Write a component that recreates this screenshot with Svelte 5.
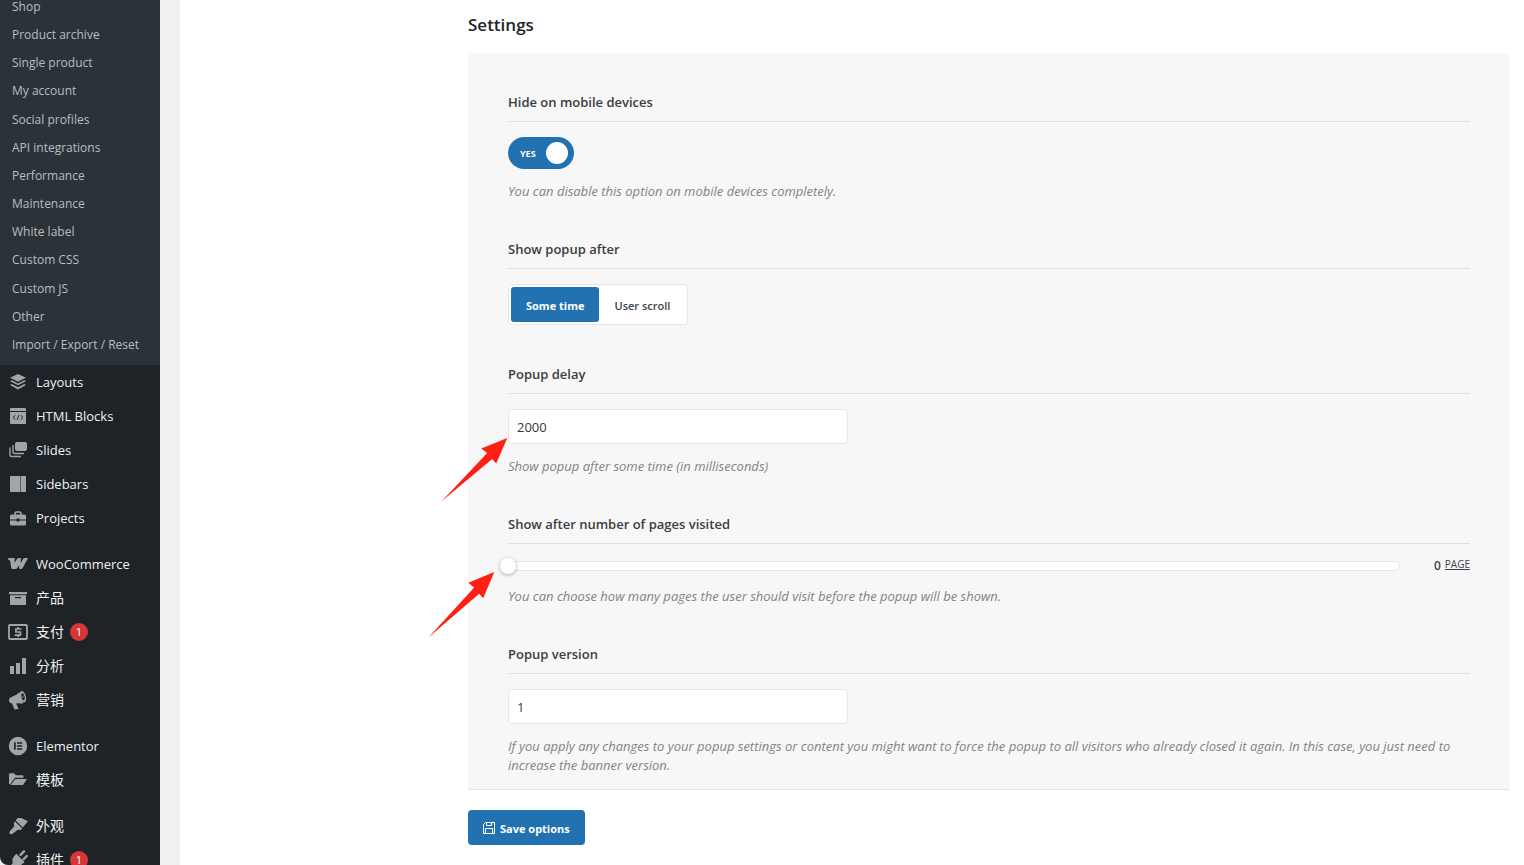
<script lang="ts">
  const submenu = [
    "Shop",
    "Product archive",
    "Single product",
    "My account",
    "Social profiles",
    "API integrations",
    "Performance",
    "Maintenance",
    "White label",
    "Custom CSS",
    "Custom JS",
    "Other",
    "Import / Export / Reset",
  ];

  const groups = [
    [
      { icon: "layouts", text: "Layouts" },
      { icon: "html", text: "HTML Blocks" },
      { icon: "slides", text: "Slides" },
      { icon: "sidebars", text: "Sidebars" },
      { icon: "projects", text: "Projects" },
    ],
    [
      { icon: "woo", text: "WooCommerce" },
      { icon: "archive", text: "产品" },
      { icon: "payments", text: "支付", count: 1 },
      { icon: "chart", text: "分析" },
      { icon: "megaphone", text: "营销" },
    ],
    [
      { icon: "elementor", text: "Elementor" },
      { icon: "folder", text: "模板" },
    ],
    [
      { icon: "brush", text: "外观" },
      { icon: "plugin", text: "插件", count: 1 },
    ],
  ];

  let hideOnMobile = true;
  let showAfter = "time";
  let delay = "2000";
  let pages = 0;
  let version = "1";
</script>

<style>
  :global(body) {
    background-color: #f0f0f1;
    font-family: "Open Sans", "Noto Sans CJK SC", sans-serif;
  }

  .shell {
    display: flex;
    gap: 20px;
    height: 100vh;
    overflow: hidden;
  }

  .sidebar {
    flex: 0 0 160px;
    overflow: hidden;
    background-color: #1d2327;
    border-bottom-left-radius: 8px;
  }

  ul {
    list-style: none;
    margin: 0;
    padding: 0;
  }

  a {
    color: inherit;
    text-decoration: none;
  }

  .submenu {
    display: flex;
    flex-direction: column;
    height: 366px;
    margin-top: -7px;
    padding-bottom: 6px;
    background-color: #2c3338;
    color: #b9bdc1;
    font-size: 12px;
    line-height: 28px;
  }

  .submenu li {
    flex: 1;
  }

  .submenu a {
    display: block;
    padding: 0 12px;
    white-space: nowrap;
  }

  .menu {
    display: flex;
    flex-direction: column;
    gap: 12px;
  }

  .menu a {
    display: flex;
    align-items: center;
    height: 34px;
    padding-left: 8px;
    color: #f0f0f1;
    font-size: 13px;
  }

  .menu svg {
    flex: none;
    width: 20px;
    height: 20px;
    margin-right: 8px;
    color: #a0a5aa;
  }

  .menu .cjk {
    font-family: "Noto Sans CJK SC", sans-serif;
    font-size: 14px;
    line-height: 20px;
    padding-bottom: 2px;
  }

  .count {
    width: 18px;
    height: 18px;
    margin-left: 6px;
    border-radius: 9px;
    background-color: #d63638;
    color: #fff;
    font-size: 11px;
    line-height: 18px;
    text-align: center;
  }

  .content {
    flex: 1;
    min-width: 0;
    padding: 0 14px 0 288px;
    background-color: #fff;
  }

  h2 {
    margin: 0;
    padding: 13px 0 16px;
    color: #1d2327;
    font-size: 17px;
    font-weight: 600;
    line-height: 24px;
  }

  .panel {
    display: flex;
    flex-direction: column;
    gap: 39px;
    padding: 39px 40px 15px;
    border-bottom: 1px solid #e5e5e5;
    border-radius: 4px 4px 0 0;
    background-color: #f7f7f7;
  }

  .field {
    position: relative;
  }

  .title {
    display: block;
    margin-bottom: 15px;
    padding-bottom: 9px;
    border-bottom: 1px solid #dfdfdf;
    color: #3a3d40;
    font-size: 13px;
    font-weight: 600;
    line-height: 20px;
  }

  .desc {
    margin: 13px 0 -1px;
    color: #7f8387;
    font-size: 13px;
    font-style: italic;
    line-height: 19px;
  }

  .switch {
    display: flex;
    align-items: center;
    justify-content: space-between;
    box-sizing: border-box;
    width: 66px;
    height: 32px;
    padding: 0 6px 0 12px;
    border: none;
    border-radius: 16px;
    background-color: #2271b1;
    color: #fff;
    font: 700 9px "Open Sans", sans-serif;
    cursor: pointer;
  }

  .switch.off {
    flex-direction: row-reverse;
    padding: 0 12px 0 6px;
    background-color: #a7aaad;
  }

  .knob {
    width: 22px;
    height: 22px;
    border-radius: 50%;
    background-color: #fff;
  }

  .set {
    display: inline-flex;
    vertical-align: top;
    padding: 2px;
    border: 1px solid #e5e5e5;
    border-radius: 4px;
    background-color: #fff;
  }

  .set button {
    height: 35px;
    padding: 2px 15px 0;
    border: none;
    border-radius: 3px;
    background-color: transparent;
    color: #3c434a;
    font: 600 11px "Open Sans", sans-serif;
    cursor: pointer;
  }

  .set button.active {
    background-color: #2271b1;
    color: #fff;
    font-weight: 700;
  }

  .text {
    display: block;
    box-sizing: border-box;
    width: 340px;
    height: 35px;
    padding: 0 8px;
    border: 1px solid #e5e5e5;
    border-radius: 4px;
    background-color: #fff;
    color: #32373c;
    font: 13px "Open Sans", sans-serif;
  }

  .range {
    display: flex;
    align-items: center;
    height: 14px;
    padding-bottom: 1px;
  }

  .track {
    flex: 1;
    display: flex;
    align-items: center;
    box-sizing: border-box;
    height: 10px;
    border: 1px solid #e5e5e5;
    border-radius: 4px;
    background-color: #fff;
  }

  .track input {
    flex: 1;
    height: 16px;
    margin: 0 -9px;
    background: transparent;
    appearance: none;
  }

  .track input::-webkit-slider-thumb {
    width: 16px;
    height: 16px;
    border-radius: 50%;
    background-color: #fff;
    box-shadow: 0 1px 4px rgba(0, 0, 0, 0.3);
    appearance: none;
  }

  .value {
    display: flex;
    justify-content: flex-end;
    gap: 4px;
    width: 70px;
    color: #3c434a;
    font-size: 12px;
    font-weight: 600;
    line-height: 18px;
  }

  .unit {
    font-size: 10px;
    font-weight: 400;
    line-height: 14px;
    text-decoration: underline;
  }

  .arrow {
    position: absolute;
    width: 66px;
    height: 66px;
    overflow: visible;
    fill: #ff2015;
    pointer-events: none;
  }

  .arrow-delay {
    top: 73px;
    left: -66px;
  }

  .arrow-pages {
    top: 57px;
    left: -79px;
    height: 68px;
  }

  .save {
    display: flex;
    align-items: center;
    gap: 5px;
    height: 35px;
    margin-top: 20px;
    padding: 1px 15px 0;
    border: none;
    border-radius: 4px;
    background-color: #2271b1;
    color: #fff;
    font: 700 11px "Open Sans", sans-serif;
    cursor: pointer;
  }

  .save svg {
    width: 12px;
    height: 12px;
  }
</style>

{#snippet glyph(name)}
  <svg viewBox="0 0 20 20" fill="currentColor" aria-hidden="true">
    {#if name === "layouts"}
      <path d="M10 2l8 3.7-8 4.1-8-4.1z" />
      <path d="M2 9.2l1.8-.9L10 11.4l6.2-3.1 1.8.9-8 4.1z" />
      <path d="M2 13l1.8-.9 6.2 3.1 6.2-3.1 1.8.9-8 4.4z" />
    {:else if name === "html"}
      <path d="M3 2h14a1 1 0 0 1 1 1v2H2V3a1 1 0 0 1 1-1z" />
      <path d="M2 6h16v11a1 1 0 0 1-1 1H3a1 1 0 0 1-1-1z" />
      <path d="M7.3 9.3L5 11.5l2.3 2.2M12.7 9.3l2.3 2.2-2.3 2.2M10.8 9l-1.6 5" fill="none" stroke="#1d2327" />
    {:else if name === "slides"}
      <rect x="7" y="2" width="12" height="9" rx="2" />
      <path d="M5 5v7a1.5 1.5 0 0 0 1.5 1.5H16M2 7.5v7.5A1.5 1.5 0 0 0 3.5 16.5H13" fill="none" stroke="currentColor" stroke-width="1.4" />
    {:else if name === "sidebars"}
      <path d="M3 2h9v16H3a1 1 0 0 1-1-1V3a1 1 0 0 1 1-1z" />
      <path d="M13 2h4a1 1 0 0 1 1 1v14a1 1 0 0 1-1 1h-4z" />
      <path d="M12 2h1v16h-1z" fill="#6b5d3a" />
    {:else if name === "projects"}
      <path d="M7 7V5.500A1.500 1.500 0 0 1 8.500 4h3A1.500 1.500 0 0 1 13 5.500V7" fill="none" stroke="currentColor" stroke-width="1.6" />
      <path d="M3.500 6.500h13A1.500 1.500 0 0 1 18 8v3.500h-6.500v-1h-3v1H2V8a1.500 1.500 0 0 1 1.500-1.500z" />
      <path d="M2 12.500h6.500v1h3v-1H18V16a1.500 1.500 0 0 1-1.500 1.500h-13A1.500 1.500 0 0 1 2 16z" />
    {:else if name === "woo"}
      <path d="M1 4h4.600c.8 0 1.200.4 1.100 1.200L6.300 9l2.900-4.200c.5-.6 1-.8 1.600-.8h1.100c.8 0 1.100.5 1 1.300L12.500 9.500 15 5c.4-.7.9-1 1.600-1H20l-5.200 9.800c-.5.9-1.200 1.200-2.300 1.200-1 0-1.500-.6-1.400-1.500l.2-2.500-2 2.900c-.6.8-1.200 1.100-2.200 1.100H5c-1.100 0-1.700-.6-1.900-1.600L2.300 7.400C2 6.400 1.600 6 .2 6V4.800C.2 4.300.5 4 1 4z" />
    {:else if name === "archive"}
      <path d="M1 4h18v2.300H1z" />
      <path d="M2 7.200h16V17H2zM7 9v1.300h6V9z" fill-rule="evenodd" />
    {:else if name === "payments"}
      <rect x="1" y="3" width="18" height="14" rx="1" fill="none" stroke="currentColor" stroke-width="1.8" />
      <path d="M12.600 7.800V7H7.900v3h4.500v3.200H7.400v-.8M10 5v2M10 13v2" fill="none" stroke="currentColor" stroke-width="1.7" />
    {:else if name === "chart"}
      <path d="M2 10h4v8H2zM8 7h4v11H8zM14 2h4v16h-4z" />
    {:else if name === "megaphone"}
      <path d="M11.200 2.300C8.500 5.200 5 6.400 2.500 7.400c-1.700.8-2 3.600-.7 5.100.8.9 2.200.8 2.200.8l2.500 6.300 4-.6-2.300-5.500c2-.4 4.500-.4 6.600.4z" />
      <path d="M14.100 1c-3.200.5-3.500 4.300-2.500 7.300.8 2.700 2.700 4.900 4.700 4.100 2-.9 2.300-4.200 1.300-7-.7-2.100-2-4.200-3.500-4.400zM14.300 3c1.400.5 2.500 3 2.500 5 0 1.700-1 3-2.100 2-1.400-1.300-2.200-6.500-.4-7z" fill-rule="evenodd" />
      <path d="M13.900 5.200c1.300.3 2 2.300 1 3.200z" />
    {:else if name === "elementor"}
      <path d="M10 .8a9.200 9.200 0 1 0 0 18.400A9.200 9.200 0 0 0 10 .8zM6 6.200h1.700v7.600H6zM9 6.200h5.200v1.500H9zM9 9.200h5.200v1.600H9zM9 12.300h5.200v1.500H9z" fill-rule="evenodd" />
    {:else if name === "folder"}
      <path d="M1 4.500A1.300 1.300 0 0 1 2.300 3.200H6l1.800 2h6.400a1.300 1.300 0 0 1 1.300 1.300v1.300H7L2 14.500l-1-.8z" />
      <path d="M7.300 8.900H19l-4 6H2.600z" />
    {:else if name === "brush"}
      <path d="M9.500 2h3.700L20 5.300l-5.200 6.300-7.100-7z" />
      <path d="M7 5.400l7.200 7-1.700 1.500-2.700-.2-5.500 4.300c-1.600 1.200-3.800-.8-2.600-2.500l4.500-5.300-.5-2.900z" />
    {:else if name === "plugin"}
      <path d="M12.600 4.800L16 1.300M15.600 9.300L18.700 6" fill="none" stroke="currentColor" stroke-width="2.400" stroke-linecap="round" />
      <path d="M8.300 3.800l8.200 8.300-2.800 2.400c-2 1.600-4.600 1.700-6.600.8L3.600 18.800l-2.200-2.200 3.500-3.500c-.9-2-.7-4.600 1-6.500z" />
    {/if}
  </svg>
{/snippet}

{#snippet arrow(place)}
  <svg class="arrow {place}" viewBox="0 0 66 66" preserveAspectRatio="none" aria-hidden="true">
    <path d="M65.300 1L39.300 11.500l5.900 4.600L-.6 64.600 50.200 22l4 4.500z" />
  </svg>
{/snippet}

<div class="shell">
  <nav class="sidebar">
    <ul class="submenu">
      {#each submenu as text}
        <li><a href="#settings">{text}</a></li>
      {/each}
    </ul>
    <div class="menu">
      {#each groups as items}
        <ul>
          {#each items as item}
            <li>
              <a href="#menu">
                {@render glyph(item.icon)}
                <span class:cjk={item.text.length === 2}>{item.text}</span>
                {#if item.count}
                  <span class="count">{item.count}</span>
                {/if}
              </a>
            </li>
          {/each}
        </ul>
      {/each}
    </div>
  </nav>

  <main class="content">
    <h2>Settings</h2>
    <div class="panel">
      <div class="field">
        <span class="title" id="mobile-title">Hide on mobile devices</span>
        <button
          class="switch"
          class:off={!hideOnMobile}
          role="switch"
          aria-checked={hideOnMobile}
          aria-labelledby="mobile-title"
          on:click={() => (hideOnMobile = !hideOnMobile)}
        >
          {hideOnMobile ? "YES" : "NO"}
          <span class="knob"></span>
        </button>
        <p class="desc">You can disable this option on mobile devices completely.</p>
      </div>

      <div class="field">
        <span class="title" id="after-title">Show popup after</span>
        <div class="set" role="group" aria-labelledby="after-title">
          <button class:active={showAfter === "time"} on:click={() => (showAfter = "time")}>Some time</button>
          <button class:active={showAfter === "scroll"} on:click={() => (showAfter = "scroll")}>User scroll</button>
        </div>
      </div>

      <div class="field">
        <label class="title" for="delay">Popup delay</label>
        <input class="text" id="delay" type="text" bind:value={delay} />
        <p class="desc">Show popup after some time (in milliseconds)</p>
        {@render arrow("arrow-delay")}
      </div>

      <div class="field">
        <label class="title" for="pages">Show after number of pages visited</label>
        <div class="range">
          <div class="track">
            <input id="pages" type="range" min="0" max="10" bind:value={pages} />
          </div>
          <div class="value">
            {pages}
            <span class="unit">PAGE</span>
          </div>
        </div>
        <p class="desc">You can choose how many pages the user should visit before the popup will be shown.</p>
        {@render arrow("arrow-pages")}
      </div>

      <div class="field">
        <label class="title" for="version">Popup version</label>
        <input class="text" id="version" type="text" bind:value={version} />
        <p class="desc">
          If you apply any changes to your popup settings or content you might want to force the popup to all visitors who already closed it again. In this case, you just need to increase the banner version.
        </p>
      </div>
    </div>

    <button class="save">
      <svg viewBox="0 0 12 12" fill="none" stroke="currentColor" aria-hidden="true">
        <path d="M2.500.5h9v11H.5v-9zM3.500.5v3h5v-3M2.500 11.500v-5h7v5" />
      </svg>
      Save options
    </button>
  </main>
</div>
